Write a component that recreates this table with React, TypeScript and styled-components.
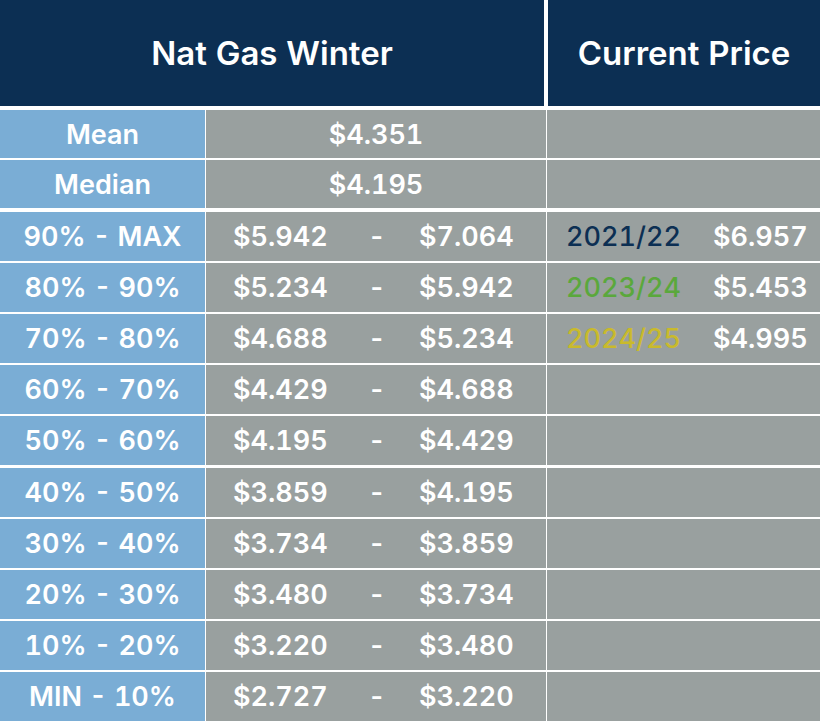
import * as React from 'react'
import styled, { createGlobalStyle } from 'styled-components'

const navy = '#0c2f53'
const blue = '#7aadd5'
const gray = '#99a09f'

const GlobalStyle = createGlobalStyle`
  html, body {
    margin: 0;
    padding: 0;
    background: #ffffff;
  }
  body {
    font-family: Inter, Lato, 'Open Sans', sans-serif;
    font-variant-numeric: tabular-nums;
  }
`

const Table = styled.div`
  width: 820px;
  height: 723px;
  background: #ffffff;
  display: flex;
  flex-direction: column;
`

const HeaderRow = styled.div`
  display: flex;
  gap: 4px;
  height: 106px;
  margin-bottom: 4px;
`

const HeaderCell = styled.div<{ $width: number }>`
  width: ${p => p.$width}px;
  flex-shrink: 0;
  background: ${navy};
  color: #ffffff;
  font-size: 33px;
  font-weight: 600;
  display: flex;
  align-items: center;
  justify-content: center;
`

const Row = styled.div<{ $height: number; $space: number }>`
  display: grid;
  grid-template-columns: 205px 340px 273px;
  column-gap: 1px;
  height: ${p => p.$height}px;
  margin-top: ${p => p.$space}px;
`

const Label = styled.div`
  background: ${blue};
  color: #ffffff;
  font-size: 27px;
  font-weight: 600;
  display: flex;
  align-items: center;
  justify-content: center;
`

const Single = styled.div`
  background: ${gray};
  color: #ffffff;
  font-size: 27px;
  font-weight: 600;
  display: flex;
  align-items: center;
  justify-content: center;
`

const Range = styled.div`
  background: ${gray};
  color: #ffffff;
  font-size: 27px;
  font-weight: 600;
  display: grid;
  grid-template-columns: 94px 10px 94px;
  column-gap: 41px;
  align-items: center;
  padding-left: 27px;
`

const Dash = styled.span`
  text-align: center;
`

const Price = styled.div`
  background: ${gray};
  color: #ffffff;
  font-size: 27px;
  font-weight: 600;
  display: grid;
  grid-template-columns: 113px 93px;
  column-gap: 34px;
  align-items: center;
  padding-left: 19px;
`

const Year = styled.span<{ $color: string }>`
  color: ${p => p.$color};
  font-weight: 500;
`

const ranges = [
  ['90% - MAX', '$5.942', '$7.064'],
  ['80% - 90%', '$5.234', '$5.942'],
  ['70% - 80%', '$4.688', '$5.234'],
  ['60% - 70%', '$4.429', '$4.688'],
  ['50% - 60%', '$4.195', '$4.429'],
  ['40% - 50%', '$3.859', '$4.195'],
  ['30% - 40%', '$3.734', '$3.859'],
  ['20% - 30%', '$3.480', '$3.734'],
  ['10% - 20%', '$3.220', '$3.480'],
  ['MIN - 10%', '$2.727', '$3.220'],
]

const current = [
  { year: '2021/22', color: navy, price: '$6.957' },
  { year: '2023/24', color: '#5aa83c', price: '$5.453' },
  { year: '2024/25', color: '#c9ba2c', price: '$4.995' },
]

export default function App() {
  return (
    <>
      <GlobalStyle />
      <Table>
        <HeaderRow>
          <HeaderCell $width={544}>Nat Gas Winter</HeaderCell>
          <HeaderCell $width={272}>Current Price</HeaderCell>
        </HeaderRow>

        <Row $height={48} $space={0}>
          <Label>Mean</Label>
          <Single>$4.351</Single>
          <Price />
        </Row>
        <Row $height={48} $space={2}>
          <Label>Median</Label>
          <Single>$4.195</Single>
          <Price />
        </Row>

        {ranges.map(([label, low, high], i) => {
          const cur = current[i]
          const space = i === 0 ? 4 : i === 5 ? 3 : 2
          return (
            <Row key={label} $height={49} $space={space}>
              <Label>{label}</Label>
              <Range>
                <span>{low}</span>
                <Dash>-</Dash>
                <span>{high}</span>
              </Range>
              <Price>
                {cur && (
                  <>
                    <Year $color={cur.color}>{cur.year}</Year>
                    <span>{cur.price}</span>
                  </>
                )}
              </Price>
            </Row>
          )
        })}
      </Table>
    </>
  )
}
